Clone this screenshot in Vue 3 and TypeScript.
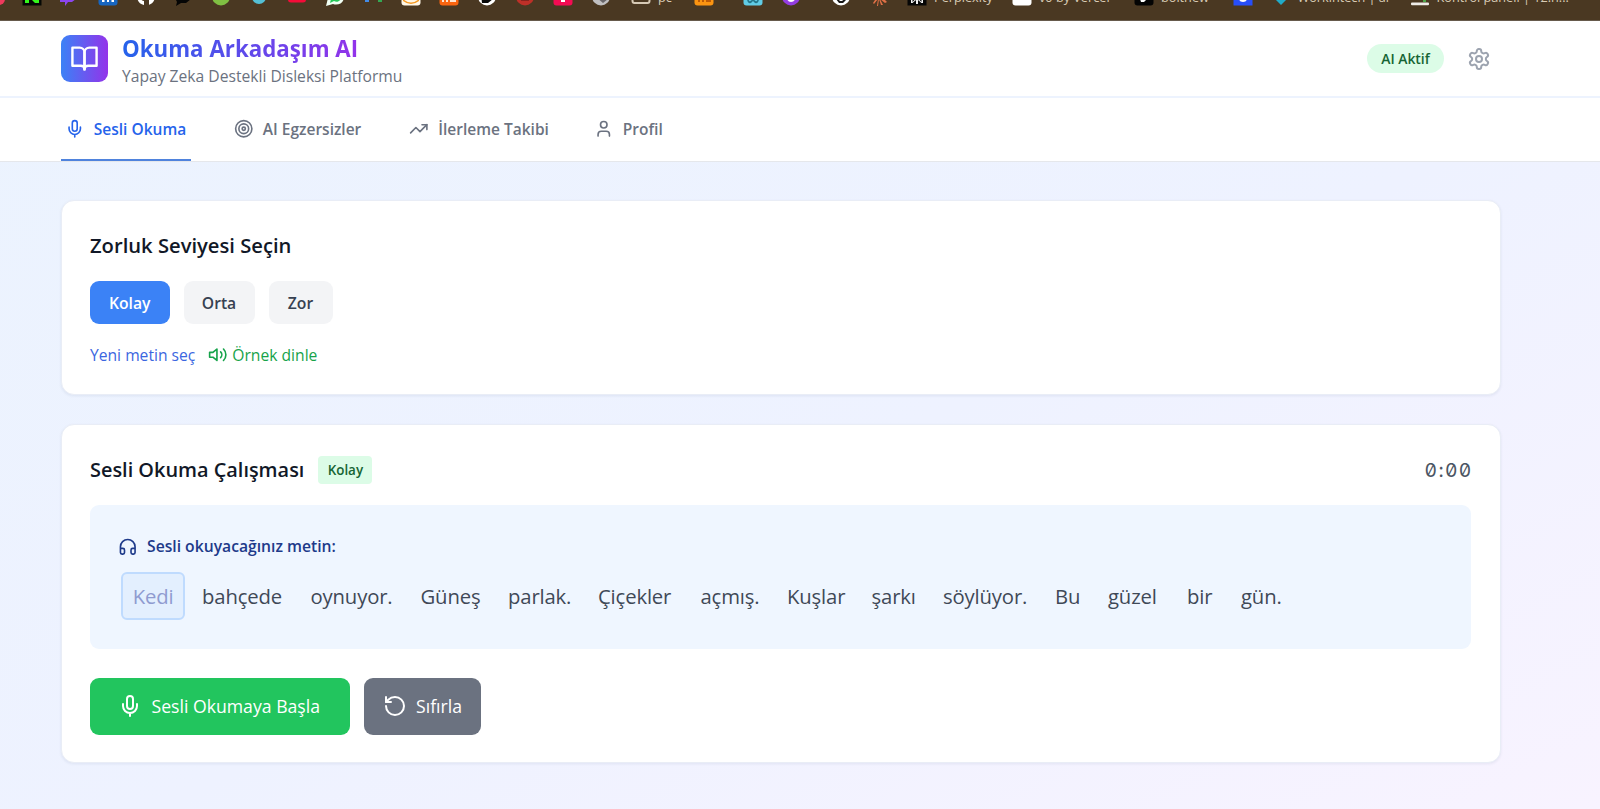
<script setup lang="ts">
import { ref } from 'vue'

interface Bookmark {
  pitch: number
  shape: string
  color: string
  glyph?: string
  glyphColor?: string
  label?: string
}

const bookmarks: Bookmark[] = [
  { pitch: 36.5, shape: 'round', color: '#ef3a5d' },
  { pitch: 36, shape: 'square', color: '#050805', glyph: 'M3 0h4v17h-4zM7 4l6 10V0h4v17h-4L7 11z', glyphColor: '#35f51c' },
  { pitch: 40, shape: 'none', color: '', glyph: 'M2 0h16v13l-4 3h-4l-3 4v-4H2z', glyphColor: '#8b45f0' },
  { pitch: 38, shape: 'tile', color: '#1766c1', glyph: 'M4 6h2.5v10H4zM9 6h2v10H9zM11 8q5-3 5 2v6h-2.5v-6q0-2-2.5 0z', glyphColor: '#fff' },
  { pitch: 37, shape: 'none', color: '', glyph: 'M8 19C3 18 1 14 1 10h3c0 3 2 5 4 5zM12 19c5-1 7-5 7-9h-6v9z', glyphColor: '#fff' },
  { pitch: 38, shape: 'none', color: '', glyph: 'M3 5h15v8l-5 4H8l-5 3 1-4-2-4z', glyphColor: '#050505' },
  { pitch: 38, shape: 'circle', color: '#80bf43' },
  { pitch: 38, shape: 'small', color: '#54bfd5' },
  { pitch: 38, shape: 'youtube', color: '#f40b38' },
  { pitch: 38, shape: 'whatsapp', color: '#f1fff4', glyph: 'M5 17l1-4C4 6 16 5 16 11c0 4-4 6-7 4z', glyphColor: '#25c858' },
  { pitch: 38, shape: 'meet', color: '#34a853', glyph: 'M2 5h4v11H2z', glyphColor: '#438be7' },
  { pitch: 38, shape: 'tile', color: '#fff7e8', glyph: 'M2 13q8 7 16 0v2q-8 6-16 0z', glyphColor: '#f49a25' },
  { pitch: 38, shape: 'tile', color: '#fa6510', glyph: 'M3 5h2v11H3zM7 5h2v11H7zM11 14h6v2h-6z', glyphColor: '#ffe5d1' },
  { pitch: 38, shape: 'circle', color: '#fff', glyph: 'M4 8h10l2 5-5 4H5z', glyphColor: '#080808' },
  { pitch: 38, shape: 'circle', color: '#bd3028', glyph: 'M6 12h8v3H6z', glyphColor: '#88231e' },
  { pitch: 38, shape: 'tile', color: '#f40b53', glyph: 'M8 6h4v10H8z', glyphColor: '#fff' },
  { pitch: 40, shape: 'circle', color: '#c0bfc1', glyph: 'M5 11l5 3 5-4 2 3-5 4z', glyphColor: '#68666a' },
  { pitch: 63, shape: 'folder', color: '#d6c9b5', label: 'pc' },
  { pitch: 49, shape: 'tile', color: '#fb9411', glyph: 'M4 9h2v7H4zM8 9h2v7H8zM12 13h5v3h-5z', glyphColor: '#be5b06' },
  { pitch: 38, shape: 'tile', color: '#60cce6', glyph: 'M4 12q0 6 4 5l2-2 2 2q4 1 4-5h-1.5q0 4-2 3l-2.5-2-2.5 2q-2 1-2-3z', glyphColor: '#24768a' },
  { pitch: 50, shape: 'circle', color: '#943de2', glyph: 'M6 8h3v5h3V8h3q0 8-5 8t-4-8z', glyphColor: '#fff' },
  { pitch: 38, shape: 'circle', color: '#fff', glyph: 'M5 13l3 4h4l4-4-1-1-4 3H9l-3-3z', glyphColor: '#171717' },
  { pitch: 38, shape: 'none', color: '', glyph: 'M9 9h2l7 7-2 1-5-4 3 6h-2l-2-6-1 7H8l1-7-4 5-1-1 4-6-6 2-1-2z', glyphColor: '#e07046' },
  { pitch: 105, shape: 'square', color: '#060606', glyph: 'M4 13h1.5v3l4-4h1l4 4v-3H16v4h-1.5l-3.5-3v4h-2v-4l-3.5 3H4z', glyphColor: '#f2f2f2', label: 'Perplexity' },
  { pitch: 122, shape: 'tile', color: '#fff', label: 'v0 by Vercel' },
  { pitch: 99, shape: 'tile', color: '#040404', glyph: 'M6 13h7l-3 3H7z', glyphColor: '#fff', label: 'boltnew' },
  { pitch: 37.5, shape: 'square', color: '#274efa', glyph: 'M6 10h2q2 5 4 0h2q1 6-4 6t-4-6z', glyphColor: '#fff' },
  { pitch: 139, shape: 'none', color: '', glyph: 'M5 14l5-5 5 5-5 5z', glyphColor: '#20abc9', label: 'Workintech | ai' },
  { pitch: 170, shape: 'line', color: '#eeece8', glyph: 'M13 12h3v4h-3z', glyphColor: '#4ea64a', label: 'Kontrol paneli | 12.n...' },
]

interface Tab {
  id: string
  label: string
  width: number
}

const tabs: Tab[] = [
  { id: 'mic', label: 'Sesli Okuma', width: 130.5 },
  { id: 'target', label: 'AI Egzersizler', width: 137 },
  { id: 'trend', label: 'İlerleme Takibi', width: 146 },
  { id: 'user', label: 'Profil', width: 78 },
]
const activeTab = ref('mic')

const levels = ['Kolay', 'Orta', 'Zor']
const level = ref('Kolay')

interface Word {
  text: string
  pitch: number
}

const words: Word[] = [
  { text: 'bahçede', pitch: 108.5 },
  { text: 'oynuyor.', pitch: 110 },
  { text: 'Güneş', pitch: 87.5 },
  { text: 'parlak.', pitch: 90 },
  { text: 'Çiçekler', pitch: 102.5 },
  { text: 'açmış.', pitch: 86.5 },
  { text: 'Kuşlar', pitch: 84.5 },
  { text: 'şarkı', pitch: 71.5 },
  { text: 'söylüyor.', pitch: 112 },
  { text: 'Bu', pitch: 53 },
  { text: 'güzel', pitch: 79 },
  { text: 'bir', pitch: 54 },
  { text: 'gün.', pitch: 44 },
]
</script>

<template>
  <div class="page">
    <div class="browser">
      <div class="bookmarks">
        <div v-for="(b, i) in bookmarks" :key="i" class="bookmark" :style="{ width: b.pitch + 'px' }">
          <svg class="favicon" viewBox="0 0 20 20">
            <rect v-if="b.shape === 'square'" x="0.5" y="0" width="19" height="19.5" :fill="b.color" />
            <rect v-else-if="b.shape === 'tile'" x="0.5" y="0" width="19" height="19.5" rx="3" :fill="b.color" />
            <rect v-else-if="b.shape === 'round'" x="0" y="0" width="19" height="19" rx="6" :fill="b.color" />
            <rect v-else-if="b.shape === 'youtube'" x="1" y="3" width="18" height="13.5" rx="3" :fill="b.color" />
            <rect v-else-if="b.shape === 'line'" x="1" y="16.5" width="18" height="2.8" rx="1" :fill="b.color" />
            <rect v-else-if="b.shape === 'folder'" x="1.5" y="4" width="17" height="13" rx="2" fill="none" stroke-width="2" :stroke="b.color" />
            <rect v-else-if="b.shape === 'meet'" x="15" y="5" width="4" height="11" :fill="b.color" />
            <circle v-else-if="b.shape === 'circle'" cx="10" cy="10.5" r="9" :fill="b.color" />
            <circle v-else-if="b.shape === 'small'" cx="10" cy="11" r="7" :fill="b.color" />
            <path v-else-if="b.shape === 'whatsapp'" d="M1 20l1.500-6C0 4 19 3 19 11c0 6-6 9-11 7z" :fill="b.color" />
            <path v-if="b.glyph" :d="b.glyph" :fill="b.glyphColor" />
          </svg>
          <span v-if="b.label" class="bookmark-label">{{ b.label }}</span>
        </div>
      </div>
    </div>

    <header class="header">
      <div class="logo">
        <svg class="line-icon" width="29" height="29" viewBox="0 0 24 24">
          <path d="M2 3h6a4 4 0 0 1 4 4v14a3 3 0 0 0-3-3H2z" />
          <path d="M22 3h-6a4 4 0 0 0-4 4v14a3 3 0 0 1 3-3h7z" />
        </svg>
      </div>
      <div class="brand">
        <h1>Okuma Arkadaşım AI</h1>
        <p>Yapay Zeka Destekli Disleksi Platformu</p>
      </div>
      <span class="status">AI Aktif</span>
      <svg class="line-icon gear" width="24" height="24" viewBox="0 0 24 24">
        <path d="M12.22 2h-.44a2 2 0 0 0-2 2v.18a2 2 0 0 1-1 1.73l-.43.25a2 2 0 0 1-2 0l-.15-.08a2 2 0 0 0-2.73.73l-.22.38a2 2 0 0 0 .73 2.73l.15.1a2 2 0 0 1 1 1.72v.51a2 2 0 0 1-1 1.74l-.15.09a2 2 0 0 0-.73 2.73l.22.38a2 2 0 0 0 2.73.73l.15-.08a2 2 0 0 1 2 0l.43.25a2 2 0 0 1 1 1.73V20a2 2 0 0 0 2 2h.44a2 2 0 0 0 2-2v-.18a2 2 0 0 1 1-1.73l.43-.25a2 2 0 0 1 2 0l.15.08a2 2 0 0 0 2.73-.73l.22-.39a2 2 0 0 0-.73-2.73l-.15-.08a2 2 0 0 1-1-1.74v-.5a2 2 0 0 1 1-1.74l.15-.09a2 2 0 0 0 .73-2.73l-.22-.38a2 2 0 0 0-2.73-.73l-.15.08a2 2 0 0 1-2 0l-.43-.25a2 2 0 0 1-1-1.73V4a2 2 0 0 0-2-2z" />
        <circle cx="12" cy="12" r="3" />
      </svg>
    </header>

    <nav class="tabs">
      <button
        v-for="t in tabs"
        :key="t.id"
        class="tab"
        :class="{ active: t.id === activeTab }"
        :style="{ width: t.width + 'px' }"
        @click="activeTab = t.id"
      >
        <svg class="line-icon" width="19.5" height="19.5" viewBox="0 0 24 24">
          <template v-if="t.id === 'mic'">
            <path d="M12 2a3 3 0 0 0-3 3v7a3 3 0 0 0 6 0V5a3 3 0 0 0-3-3Z" />
            <path d="M19 10v2a7 7 0 0 1-14 0v-2M12 19v3" />
          </template>
          <template v-else-if="t.id === 'target'">
            <circle cx="12" cy="12" r="10" />
            <circle cx="12" cy="12" r="6" />
            <circle cx="12" cy="12" r="2" />
          </template>
          <template v-else-if="t.id === 'trend'">
            <path d="M22 7 13.500 15.500l-5-5L2 17" />
            <path d="M16 7h6v6" />
          </template>
          <template v-else>
            <path d="M19 21v-2a4 4 0 0 0-4-4H9a4 4 0 0 0-4 4v2" />
            <circle cx="12" cy="7" r="4" />
          </template>
        </svg>
        <span>{{ t.label }}</span>
      </button>
    </nav>

    <main class="content">
      <section class="card levels-card">
        <h2>Zorluk Seviyesi Seçin</h2>
        <div class="levels">
          <button
            v-for="l in levels"
            :key="l"
            class="level"
            :class="[l.toLowerCase(), { chosen: l === level }]"
            @click="level = l"
          >
            {{ l }}
          </button>
        </div>
        <div class="links">
          <a class="new-text">Yeni metin seç</a>
          <a class="listen">
            <svg class="line-icon" width="19.5" height="19.5" viewBox="0 0 24 24">
              <path d="M11 5 6 9H2v6h4l5 4z" />
              <path d="M15.540 8.460a5 5 0 0 1 0 7.070M19.070 4.930a10 10 0 0 1 0 14.140" />
            </svg>
            <span>Örnek dinle</span>
          </a>
        </div>
      </section>

      <section class="card reading-card">
        <div class="reading-head">
          <h2>Sesli Okuma Çalışması</h2>
          <span class="badge">{{ level }}</span>
          <span class="timer">0:00</span>
        </div>
        <div class="passage">
          <div class="passage-title">
            <svg class="line-icon" width="19.5" height="19.5" viewBox="0 0 24 24">
              <path d="M3 14h3a2 2 0 0 1 2 2v3a2 2 0 0 1-2 2H5a2 2 0 0 1-2-2v-7a9 9 0 0 1 18 0v7a2 2 0 0 1-2 2h-1a2 2 0 0 1-2-2v-3a2 2 0 0 1 2-2h3" />
            </svg>
            <span>Sesli okuyacağınız metin:</span>
          </div>
          <div class="words">
            <span class="current">Kedi</span>
            <span v-for="w in words" :key="w.text" class="word" :style="{ width: w.pitch + 'px' }">{{ w.text }}</span>
          </div>
        </div>
        <div class="actions">
          <button class="action start">
            <svg class="line-icon" width="24" height="24" viewBox="0 0 24 24">
              <path d="M12 2a3 3 0 0 0-3 3v7a3 3 0 0 0 6 0V5a3 3 0 0 0-3-3Z" />
              <path d="M19 10v2a7 7 0 0 1-14 0v-2M12 19v3" />
            </svg>
            <span>Sesli Okumaya Başla</span>
          </button>
          <button class="action reset">
            <svg class="line-icon" width="24" height="24" viewBox="0 0 24 24">
              <path d="M3 12a9 9 0 1 0 9-9 9.750 9.750 0 0 0-6.740 2.740L3 8" />
              <path d="M3 3v5h5" />
            </svg>
            <span>Sıfırla</span>
          </button>
        </div>
      </section>
    </main>
  </div>
</template>

<style>
body {
  overflow: hidden;
}
</style>

<style scoped>
* {
  box-sizing: border-box;
}
.page {
  height: 809px;
  display: flex;
  flex-direction: column;
  font-family: 'Open Sans', 'Noto Sans', sans-serif;
  background: linear-gradient(to bottom right, #ebf3fe 0%, #eef2ff 55%, #f8f3ff 100%);
}
button {
  font: inherit;
  border: 0;
  background: none;
  padding: 0;
}
h1,
h2,
p {
  margin: 0;
}
.line-icon {
  display: block;
  flex: none;
  fill: none;
  stroke: currentColor;
  stroke-width: 2;
  stroke-linecap: round;
  stroke-linejoin: round;
}

/* bookmarks strip */
.browser {
  flex: none;
  height: 21px;
  overflow: hidden;
  background: #4a3822;
  border-bottom: 1px solid #665a4c;
}
.bookmarks {
  display: flex;
  margin-top: -14px;
  margin-left: -14.5px;
  width: 1640px;
}
.bookmark {
  flex: none;
  display: flex;
  height: 20px;
}
.favicon {
  flex: none;
  width: 20px;
  height: 20px;
}
.bookmark-label {
  margin-left: 7px;
  font-size: 12.7px;
  line-height: 20px;
  color: #d8cbb5;
  white-space: nowrap;
  margin-top: 1px;
}

/* header */
.header {
  flex: none;
  height: 77px;
  background: #fff;
  border-bottom: 2px solid #edf3fe;
  display: flex;
  align-items: center;
  padding: 0 109px 0 60.5px;
}
.logo {
  width: 47.5px;
  height: 47.5px;
  border-radius: 9px;
  background: linear-gradient(to right, #3b82f6, #9333ea);
  color: #fff;
  display: flex;
  align-items: center;
  justify-content: center;
}
.brand {
  margin-left: 14px;
  flex: 1;
  padding-top: 4px;
}
.brand h1 {
  display: table;
  font-size: 22.3px;
  line-height: 30px;
  font-weight: 700;
  background: linear-gradient(to right, #2563eb, #9333ea);
  background-clip: text;
  -webkit-background-clip: text;
  color: transparent;
}
.brand p {
  font-size: 15.65px;
  line-height: 24px;
  color: #6b7280;
}
.status {
  width: 77px;
  height: 29px;
  line-height: 29px;
  border-radius: 15px;
  text-align: center;
  background: #dcfce7;
  color: #166534;
  font-size: 13.9px;
  font-weight: 600;
}
.gear {
  margin-left: 23px;
  color: #9ca3af;
}

/* tabs */
.tabs {
  flex: none;
  height: 64px;
  background: #fff;
  border-bottom: 1px solid #e5e7eb;
  padding-left: 60.5px;
  display: flex;
  gap: 38.5px;
}
.tab {
  height: 63px;
  display: flex;
  align-items: center;
  gap: 9.5px;
  padding: 0 4.3px;
  border-bottom: 2px solid transparent;
  font-size: 15.5px;
  font-weight: 590;
  color: #6b7280;
  white-space: nowrap;
}
.tab.active {
  color: #2563eb;
  border-bottom-color: #4f83dd;
}

/* cards */
.content {
  display: flex;
  flex-direction: column;
  gap: 29px;
  padding: 38px 99.5px 0 60.5px;
}
.card {
  background: #fff;
  border: 1px solid #e9edf6;
  border-radius: 13px;
  padding: 0 28.5px;
  box-shadow: 0 1px 3px rgba(30, 50, 100, 0.08);
}
.card h2 {
  font-size: 20.2px;
  line-height: 30px;
  font-weight: 550;
  color: #111827;
  white-space: nowrap;
}
.levels-card {
  height: 195.4px;
  padding-top: 29px;
}
.levels {
  display: flex;
  gap: 14px;
  margin-top: 21px;
}
.level {
  height: 42.5px;
  padding-top: 1px;
  border-radius: 9px;
  background: #f3f4f6;
  color: #374151;
  font-size: 15.7px;
  font-weight: 600;
}
.level.kolay {
  width: 79.5px;
}
.level.orta {
  width: 71px;
}
.level.zor {
  width: 64px;
}
.level.chosen {
  background: #3b82f6;
  color: #fff;
}
.links {
  margin-top: 19px;
  display: flex;
  align-items: center;
  font-size: 15.65px;
  line-height: 24px;
}
.new-text {
  color: #3b66e0;
}
.listen {
  margin-left: 13px;
  display: flex;
  align-items: center;
  gap: 4.5px;
  color: #16a34a;
}
.reading-card {
  height: 339px;
  padding-top: 30.5px;
}
.reading-head {
  display: flex;
  align-items: center;
  height: 29px;
}
.reading-card h2 {
  font-size: 19.9px;
}
.badge {
  margin-left: 14px;
  width: 54px;
  height: 28px;
  line-height: 29px;
  border-radius: 4px;
  text-align: center;
  background: #dcfce7;
  color: #166534;
  font-size: 13.4px;
  font-weight: 600;
}
.timer {
  margin-left: auto;
  margin-right: -1.5px;
  font-family: Inter, monospace;
  font-feature-settings: 'tnum', 'zero';
  font-size: 19.3px;
  letter-spacing: 1.3px;
  color: #4b5563;
}
.passage {
  margin-top: 20.5px;
  height: 144px;
  border-radius: 9px;
  background: #eff6ff;
  padding: 29px 28px 0;
}
.passage-title {
  display: flex;
  align-items: center;
  gap: 9.5px;
  height: 24px;
  font-size: 15.7px;
  font-weight: 550;
  color: #1e3a8a;
}
.words {
  display: flex;
  align-items: center;
  margin-top: 14px;
  font-size: 20.3px;
  letter-spacing: -0.15px;
  color: #3f4957;
  white-space: nowrap;
}
.current {
  width: 64px;
  height: 48px;
  line-height: 44px;
  margin: 0 17px 0 3px;
  text-align: center;
  border: 2px solid #bfdbfe;
  border-radius: 6px;
  background: #e3effe;
  color: #8f9bd0;
}
.word {
  flex: none;
}
.actions {
  display: flex;
  gap: 14px;
  margin-top: 28.3px;
}
.action {
  height: 57px;
  border-radius: 9px;
  display: flex;
  align-items: center;
  color: #fff;
  font-size: 17.65px;
  white-space: nowrap;
}
.start {
  width: 260px;
  padding-left: 28px;
  gap: 9.5px;
  background: #22c55e;
}
.reset {
  width: 117px;
  padding-left: 18.5px;
  gap: 9.5px;
  background: #6b7280;
}
</style>
